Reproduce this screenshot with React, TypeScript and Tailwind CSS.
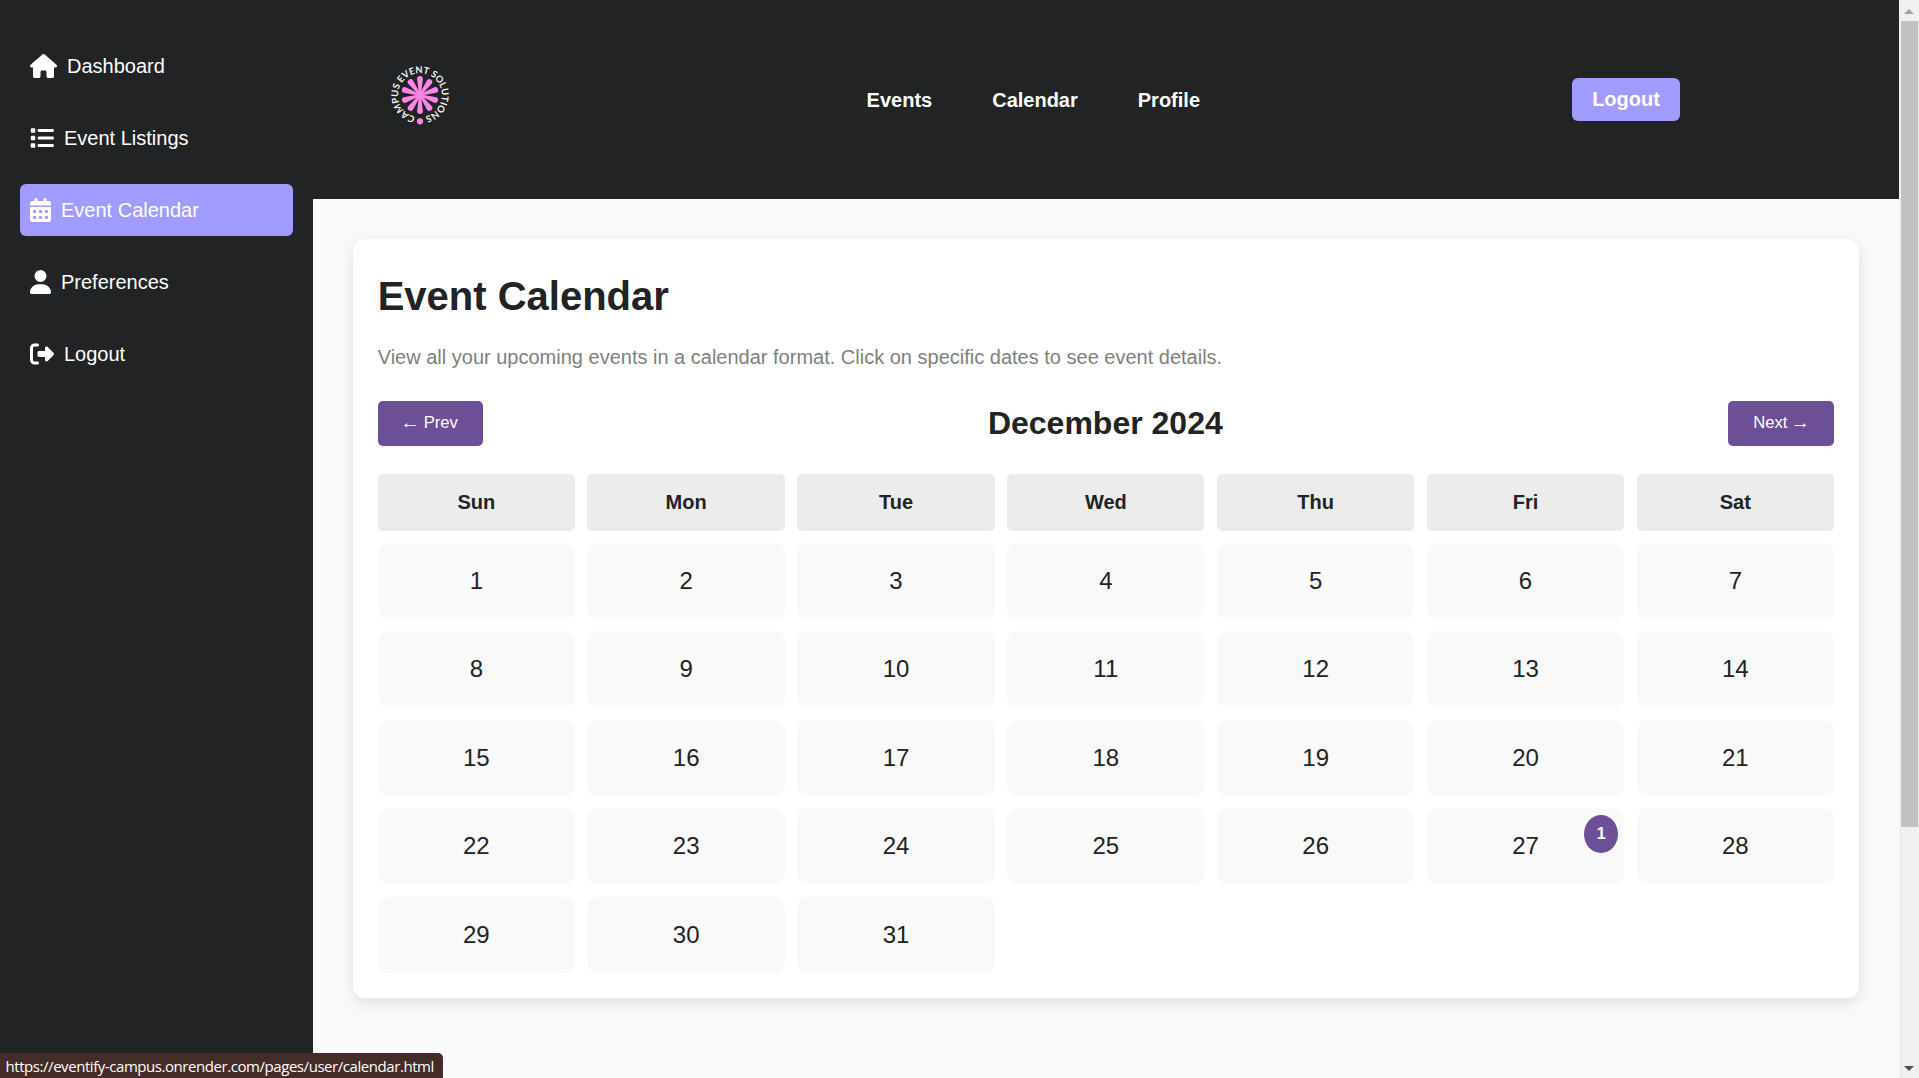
import React from "react";
import { FaHouse, FaList, FaCalendarDays, FaUser, FaRightFromBracket } from "react-icons/fa6";

const navItems = [
  { label: "Dashboard", Icon: FaHouse, width: 27 },
  { label: "Event Listings", Icon: FaList, width: 24 },
  { label: "Event Calendar", Icon: FaCalendarDays, width: 21, active: true },
  { label: "Preferences", Icon: FaUser, width: 21 },
  { label: "Logout", Icon: FaRightFromBracket, width: 24 },
];

const weekdays = ["Sun", "Mon", "Tue", "Wed", "Thu", "Fri", "Sat"];
const days = Array.from({ length: 31 }, (_, i) => i + 1);
const eventCounts: Record<number, number> = { 27: 1 };
const rays = Array.from({ length: 10 }, (_, i) => i * 36);

function Logo() {
  return (
    <svg width="76" height="76" viewBox="-38 -38 76 76" className="overflow-visible" aria-label="Campus Event Solutions">
      <defs>
        <path id="ring" d="M -4.8 21.4 A 21.9 21.9 0 1 1 4.8 21.4" />
      </defs>
      {rays.map((angle) => (
        <path
          key={angle}
          d="M -0.9 0 L -2.9 -16 A 2.9 2.9 0 0 1 2.9 -16 L 0.9 0 Z"
          fill="#ff85e8"
          transform={`rotate(${angle})`}
        />
      ))}
      <circle cx="0" cy="26.3" r="3.1" fill="#ff85e8" />
      <text fill="#f4f4ee" fontFamily="Lato, sans-serif" fontWeight="700" fontSize="9.4">
        <textPath href="#ring" textLength="127" lengthAdjust="spacing">
          CAMPUS EVENT SOLUTIONS
        </textPath>
      </text>
    </svg>
  );
}

function Sidebar() {
  return (
    <aside className="flex w-[313px] shrink-0 flex-col gap-5 bg-[#212324] px-5 pt-10 text-white">
      {navItems.map(({ label, Icon, width, active }) => (
        <a
          key={label}
          className={`flex h-[52px] items-center gap-[10px] rounded-[6px] pl-[10px] text-[20px] ${active ? "bg-[#a29bfe]" : ""}`}
        >
          <Icon style={{ width, height: 24 }} />
          <span>{label}</span>
        </a>
      ))}
    </aside>
  );
}

function Header() {
  return (
    <header className="flex h-[199px] shrink-0 items-center bg-[#212324] pl-[69px] pr-[219px] text-[20px] font-bold text-white">
      <div className="-mt-[10px]">
        <Logo />
      </div>
      <nav className="ml-[408.6px] flex gap-[60px]">
        <a>Events</a>
        <a>Calendar</a>
        <a>Profile</a>
      </nav>
      <button className="ml-auto h-[43px] w-[108px] rounded-[6px] bg-[#a29bfe] pb-[2px]">Logout</button>
    </header>
  );
}

function Calendar() {
  return (
    <section className="mx-10 mt-10 h-[759px] rounded-[12px] bg-white py-[25px] pr-[25px] pl-[24.67px] text-[#212324] shadow-[0_5px_12.5px_rgba(0,0,0,0.1)]">
      <h1 className="mt-[8px] text-[40px] leading-[48px] font-bold">Event Calendar</h1>
      <p className="mt-[22px] text-[20px] leading-[30px] text-[#808080]">
        View all your upcoming events in a calendar format. Click on specific dates to see event details.
      </p>
      <div className="mt-[29px] flex h-[45px] items-center justify-between">
        <button className="h-[45px] w-[105px] rounded-[5px] bg-[#6c4f96] pb-[2px] text-[16.67px] text-white">
          <span className="inline-block scale-x-[1.2]">←</span> Prev
        </button>
        <h2 className="pb-[2px] text-[32px] font-bold">December 2024</h2>
        <button className="h-[45px] w-[106px] rounded-[5px] bg-[#6c4f96] pb-[2px] text-[16.67px] text-white">
          Next <span className="inline-block scale-x-[1.2]">→</span>
        </button>
      </div>
      <div className="mt-[28px] grid grid-cols-7 gap-x-[12.5px] gap-y-[12.4px]">
        {weekdays.map((d) => (
          <div key={d} className="flex h-[56.6px] items-center justify-center rounded-[5px] bg-[#ececec] pb-[1.5px] text-[20px] font-bold">
            {d}
          </div>
        ))}
        {days.map((d) => (
          <div key={d} className="relative flex h-[76px] items-center justify-center rounded-[10px] bg-[#f9f9f9] text-[24px]">
            {d}
            {eventCounts[d] && (
              <span className="absolute top-[6.5px] right-[6px] flex h-[38px] w-[34px] items-center justify-center rounded-[50%] bg-[#6c4f96] text-[16px] font-bold text-white">
                {eventCounts[d]}
              </span>
            )}
          </div>
        ))}
      </div>
    </section>
  );
}

function Scrollbar() {
  return (
    <div className="flex w-5 shrink-0 flex-col items-center bg-[#f0f0f0]">
      <div className="flex h-[21px] items-start pt-[9px]">
        <svg width="10" height="5" viewBox="0 0 10 5"><path d="M5 0 L10 5 H0 Z" fill="#a3a3a3" /></svg>
      </div>
      <div className="h-[806px] w-[17px] bg-[#c1c1c1]" />
      <div className="mt-auto flex pb-[7px]">
        <svg width="10" height="5" viewBox="0 0 10 5"><path d="M0 0 H10 L5 5 Z" fill="#505050" /></svg>
      </div>
    </div>
  );
}

export default function App() {
  return (
    <div className="relative flex h-[1078px] w-[1919px] overflow-hidden bg-[#f9f9f9] font-['Liberation_Sans',Arial,sans-serif]">
      <Sidebar />
      <main className="flex min-w-0 flex-1 flex-col">
        <Header />
        <Calendar />
      </main>
      <Scrollbar />
      <div className="absolute bottom-0 left-0 flex h-[25px] w-[443px] items-center rounded-tr-[5px] bg-[#442c28] pt-[2px] pl-[5.5px] font-['Open_Sans',sans-serif] text-[15px] tracking-[-0.44px] whitespace-nowrap text-white">
        https://eventify-campus.onrender.com/pages/user/calendar.html
      </div>
    </div>
  );
}
